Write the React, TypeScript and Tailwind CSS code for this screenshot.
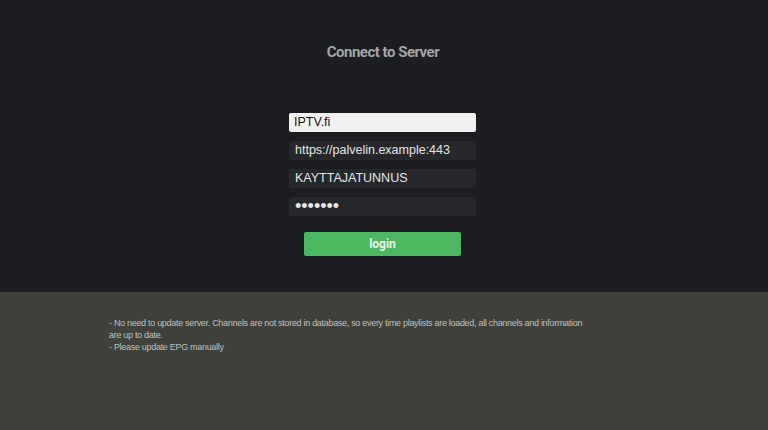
export default function App() {
  const fields = [
    { value: "IPTV.fi", active: true },
    { value: "https://palvelin.example:443" },
    { value: "KAYTTAJATUNNUS" },
    { value: "•••••••", dots: true },
  ];

  return (
    <div className="w-[768px] h-[430px] flex flex-col font-['Liberation_Sans',Arial,sans-serif]">
      {/* Connect form */}
      <div className="h-[292px] bg-[#1b1d21] flex flex-col items-center">
        <h1 className="mt-[43px] ml-[-2px] text-[15px] leading-[18px] font-bold text-[#a4a5a7] font-['Roboto',sans-serif] tracking-[-0.5px]">
          Connect to Server
        </h1>

        <div className="mt-[52px] ml-[-3px] flex flex-col gap-[9px]">
          {fields.map((f) => (
            <div
              key={f.value}
              className={
                f.active
                  ? "w-[187px] h-[19px] rounded-[2px] bg-[#f1f1f1] px-[5px] flex items-center text-[12.5px] text-[#111]"
                  : "w-[187px] h-[19px] rounded-[2px] bg-[#25272b] px-[6px] flex items-center text-[12.5px] text-[#e6e6e6]"
              }
            >
              {f.dots ? (
                <span className="text-[18px] leading-[19px] mt-[-1px]">{f.value}</span>
              ) : (
                <span>{f.value}</span>
              )}
            </div>
          ))}
        </div>

        <button className="mt-[16px] ml-[-3px] w-[157px] h-[24px] rounded-[2px] bg-[#4db862] text-[12px] font-bold text-[#eaf5ec] font-['Roboto',sans-serif]">
          login
        </button>
      </div>

      {/* Notes */}
      <div className="flex-1 bg-[#40413d] pl-[109px] pt-[25px]">
        <p className="text-[9px] leading-[12px] text-[#bfc0bb] tracking-[-0.3px]">
          <span className="whitespace-nowrap">
            - No need to update server. Channels are not stored in database, so every time playlists are loaded, all channels and information
          </span>
          <br />
          are up to date.
          <br />- Please update EPG manually
        </p>
      </div>
    </div>
  );
}
